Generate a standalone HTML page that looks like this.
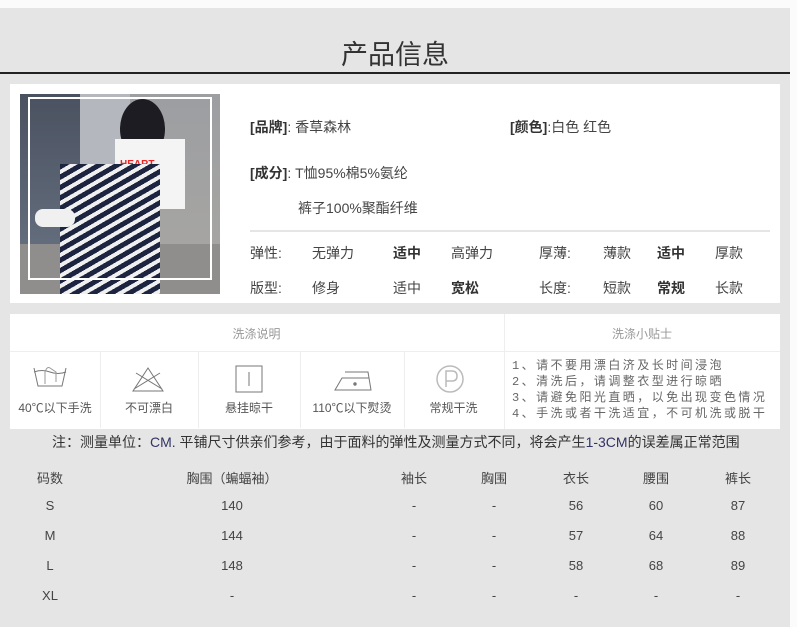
<!DOCTYPE html>
<html><head><meta charset="utf-8"><style>
*{margin:0;padding:0;box-sizing:border-box}
body{width:797px;height:627px;background:#fbfbfb;font-family:"Liberation Sans","Noto Sans CJK SC",sans-serif;position:relative;overflow:hidden;color:#333}
.bg{position:absolute;left:0;top:8px;width:790px;height:619px;background:#e5e5e5}
.abs{position:absolute;white-space:nowrap}
.title{left:0;width:790px;top:33px;text-align:center;font-size:27px;color:#333}
.line{left:0;top:72px;width:790px;height:2px;background:#222}
.card{left:10px;top:84px;width:770px;height:219px;background:#fff}
.img{left:20px;top:94px;width:200px;height:200px;overflow:hidden;background:#8a8f96}
.t{font-size:14px;color:#444}
b{color:#333}
.wash{left:10px;top:314px;width:770px;height:115px;background:#fff}
.wh{font-size:12px;color:#999;text-align:center}
.ws{font-size:12px;color:#555;text-align:center}
.vd{position:absolute;top:352px;width:1px;height:76px;background:#eee}
.tip{font-family:"Liberation Mono","Noto Sans CJK SC",monospace;font-size:12px;color:#666;letter-spacing:2.45px;line-height:16px}
.tb{font-size:13px;color:#444;text-align:center;width:80px}
</style></head><body>
<div class="bg"></div>
<div class="abs title">产品信息</div>
<div class="abs line"></div>
<div class="abs card"></div>
<div class="abs img">
 <div style="position:absolute;left:0;top:0;width:60px;height:200px;background:linear-gradient(#4a5260,#6b7585)"></div>
 <div style="position:absolute;left:60px;top:0;width:50px;height:200px;background:#b4b8be"></div>
 <div style="position:absolute;left:110px;top:0;width:90px;height:200px;background:linear-gradient(#9c9ea2,#a9a7a3)"></div>
 <div style="position:absolute;left:0;top:150px;width:200px;height:50px;background:#8f8e8c"></div>
 <div style="position:absolute;left:100px;top:5px;width:45px;height:60px;border-radius:50%;background:#1c1c22"></div>
 <div style="position:absolute;left:95px;top:45px;width:70px;height:70px;background:#f4f4f4"></div>
 <div style="position:absolute;left:100px;top:65px;width:30px;height:20px;color:#e22;font:bold 10px sans-serif">HEART<br>REACT</div>
 <div style="position:absolute;left:40px;top:70px;width:100px;height:130px;background:repeating-linear-gradient(150deg,#1c2440 0 5px,#f0f0f0 5px 9px)"></div>
 <div style="position:absolute;left:15px;top:115px;width:40px;height:18px;border-radius:8px;background:#f0f0f0"></div>
 <div style="position:absolute;left:8px;top:3px;width:184px;height:183px;border:2px solid #fff"></div>
</div>
<div class="abs t" style="left:250px;top:117px"><b>[品牌]</b>: 香草森林</div>
<div class="abs t" style="left:510px;top:117px"><b>[颜色]</b>:白色 红色</div>
<div class="abs t" style="left:250px;top:163px"><b>[成分]</b>: T恤95%棉5%氨纶</div>
<div class="abs t" style="left:298px;top:198px">裤子100%聚酯纤维</div>
<div class="abs" style="left:250px;top:230px;width:520px;height:2px;background:#e5e5e5"></div>
<div class="abs t" style="left:250px;top:243px">弹性:</div>
<div class="abs t" style="left:312px;top:243px">无弹力</div>
<div class="abs t" style="left:393px;top:243px"><b>适中</b></div>
<div class="abs t" style="left:451px;top:243px">高弹力</div>
<div class="abs t" style="left:539px;top:243px">厚薄:</div>
<div class="abs t" style="left:603px;top:243px">薄款</div>
<div class="abs t" style="left:657px;top:243px"><b>适中</b></div>
<div class="abs t" style="left:715px;top:243px">厚款</div>
<div class="abs t" style="left:250px;top:278px">版型:</div>
<div class="abs t" style="left:312px;top:278px">修身</div>
<div class="abs t" style="left:393px;top:278px">适中</div>
<div class="abs t" style="left:451px;top:278px"><b>宽松</b></div>
<div class="abs t" style="left:539px;top:278px">长度:</div>
<div class="abs t" style="left:603px;top:278px">短款</div>
<div class="abs t" style="left:657px;top:278px"><b>常规</b></div>
<div class="abs t" style="left:715px;top:278px">长款</div>

<div class="abs wash"></div>
<div class="abs" style="left:10px;top:351px;width:770px;height:1px;background:#eee"></div>
<div class="abs wh" style="left:10px;top:325px;width:493px">洗涤说明</div>
<div class="abs wh" style="left:504px;top:325px;width:276px">洗涤小贴士</div>
<div class="abs" style="left:504px;top:314px;width:1px;height:115px;background:#eee"></div>
<div class="vd" style="left:100px"></div><div class="vd" style="left:198px"></div><div class="vd" style="left:300px"></div><div class="vd" style="left:404px"></div>
<svg class="abs" style="left:0;top:360px" width="504" height="36" fill="none" stroke="#777" stroke-width="1">
 <path d="M34 8 L38 26 H62 L66 8 M34 12 Q42 9 50 12 Q58 15 66 12"/><path d="M45 24 V12 Q47 6 50 8 L56 12 V22" stroke="#999"/>
 <path d="M148 8 L133 31 H163 Z M136 13 L162 29 M160 13 L134 29"/>
 <rect x="236" y="6" width="26" height="26"/><path d="M249 12 V26"/>
 <path d="M335 30 L342 18 H369 L371 30 Z M345 12 H368 L369 18"/><circle cx="355" cy="24" r="1.2" fill="#777"/>
 <circle cx="450" cy="19" r="13" stroke="#bbb" stroke-width="1.5"/><path d="M446 27 V11 H452 Q457 11 457 16 Q457 21 452 21 H446" stroke="#bbb" stroke-width="1.5"/>
</svg>
<div class="abs ws" style="left:10px;top:399px;width:90px">40℃以下手洗</div>
<div class="abs ws" style="left:100px;top:399px;width:98px">不可漂白</div>
<div class="abs ws" style="left:198px;top:399px;width:102px">悬挂晾干</div>
<div class="abs ws" style="left:300px;top:399px;width:104px">110℃以下熨烫</div>
<div class="abs ws" style="left:404px;top:399px;width:99px">常规干洗</div>
<div class="abs tip" style="left:512px;top:358px">1、请不要用漂白济及长时间浸泡<br>2、清洗后，请调整衣型进行晾晒<br>3、请避免阳光直晒，以免出现变色情况<br>4、手洗或者干洗适宜，不可机洗或脱干</div>
<div class="abs" style="left:52px;top:432px;font-size:14px;color:#333">注：测量单位：<span style="color:#336">CM.</span> 平铺尺寸供亲们参考，由于面料的弹性及测量方式不同，将会产生<span style="color:#336">1-3CM</span>的误差属正常范围</div>

<div class="abs tb" style="left:10px;top:468px">码数</div><div class="abs tb" style="left:172px;top:468px;width:120px">胸围（蝙蝠袖）</div><div class="abs tb" style="left:374px;top:468px">袖长</div><div class="abs tb" style="left:454px;top:468px">胸围</div><div class="abs tb" style="left:536px;top:468px">衣长</div><div class="abs tb" style="left:616px;top:468px">腰围</div><div class="abs tb" style="left:698px;top:468px">裤长</div>
<div class="abs tb" style="left:10px;top:498px">S</div><div class="abs tb" style="left:192px;top:498px">140</div><div class="abs tb" style="left:374px;top:498px">-</div><div class="abs tb" style="left:454px;top:498px">-</div><div class="abs tb" style="left:536px;top:498px">56</div><div class="abs tb" style="left:616px;top:498px">60</div><div class="abs tb" style="left:698px;top:498px">87</div>
<div class="abs tb" style="left:10px;top:528px">M</div><div class="abs tb" style="left:192px;top:528px">144</div><div class="abs tb" style="left:374px;top:528px">-</div><div class="abs tb" style="left:454px;top:528px">-</div><div class="abs tb" style="left:536px;top:528px">57</div><div class="abs tb" style="left:616px;top:528px">64</div><div class="abs tb" style="left:698px;top:528px">88</div>
<div class="abs tb" style="left:10px;top:558px">L</div><div class="abs tb" style="left:192px;top:558px">148</div><div class="abs tb" style="left:374px;top:558px">-</div><div class="abs tb" style="left:454px;top:558px">-</div><div class="abs tb" style="left:536px;top:558px">58</div><div class="abs tb" style="left:616px;top:558px">68</div><div class="abs tb" style="left:698px;top:558px">89</div>
<div class="abs tb" style="left:10px;top:588px">XL</div><div class="abs tb" style="left:192px;top:588px">-</div><div class="abs tb" style="left:374px;top:588px">-</div><div class="abs tb" style="left:454px;top:588px">-</div><div class="abs tb" style="left:536px;top:588px">-</div><div class="abs tb" style="left:616px;top:588px">-</div><div class="abs tb" style="left:698px;top:588px">-</div>
</body></html>
